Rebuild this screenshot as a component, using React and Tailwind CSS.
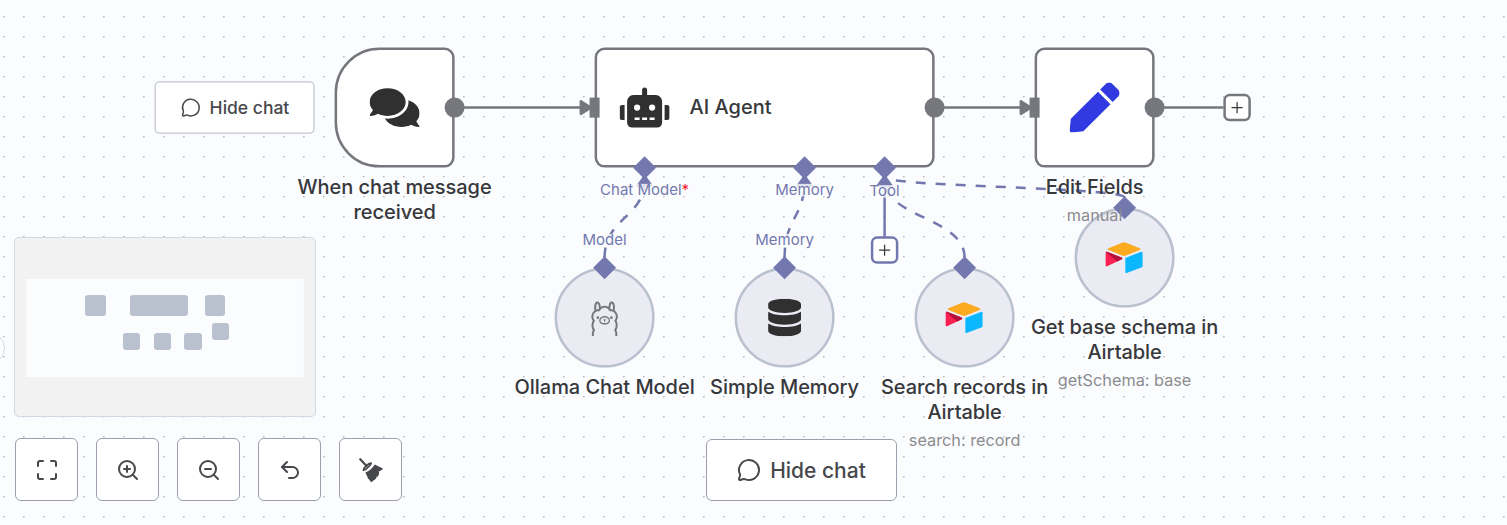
import React from "react";
import { MessageCircle, Maximize, ZoomIn, ZoomOut, Undo2, Plus } from "lucide-react";
import { FaComments, FaRobot, FaPen, FaDatabase } from "react-icons/fa";
import { SiOllama } from "react-icons/si";

const AirtableIcon = ({ className }) => (
  <svg viewBox="0 0 200 170" className={className}>
    <path fill="#fcab21" d="M90.04 12.37 24.08 39.66c-3.67 1.52-3.63 6.73.06 8.19l66.24 26.27a24.58 24.58 0 0 0 18.12 0l66.23-26.27c3.69-1.46 3.73-6.67.06-8.19l-65.96-27.29a24.58 24.58 0 0 0-18.79 0" />
    <path fill="#0bb8ff" d="M105.31 88.46v65.62c0 3.12 3.15 5.26 6.05 4.1l73.81-28.64a4.42 4.42 0 0 0 2.79-4.11V59.81c0-3.12-3.15-5.26-6.05-4.11l-73.81 28.65a4.42 4.42 0 0 0-2.79 4.11" />
    <path fill="#fb1f52" d="m88.08 91.85-21.9 10.57-2.23 1.08-46.24 22.15c-2.93 1.41-6.67-.72-6.67-3.98V60.09c0-1.18.6-2.2 1.41-2.96.34-.34.72-.62 1.12-.84 1.11-.66 2.69-.84 4.03-.31l70.11 27.78c3.57 1.41 3.85 6.41.37 8.09" />
    <path fill="#b3103c" d="m88.08 91.85-21.9 10.57-53.72-45.29c.34-.34.72-.62 1.12-.84 1.11-.66 2.69-.84 4.03-.31l70.11 27.78c3.56 1.41 3.84 6.41.36 8.09" />
  </svg>
);

const BroomIcon = () => (
  <svg viewBox="0 0 24 24" className="h-6 w-6 overflow-visible" fill="#47484b">
    <path d="M1.2 1.2 7.6 8" fill="none" stroke="#47484b" strokeWidth="2.2" strokeLinecap="round" />
    <path d="M4.6 12.2C5.2 9.2 8.2 6 12 5.2" fill="none" stroke="#47484b" strokeWidth="2" strokeLinecap="round" />
    <path d="M6.6 11.6 11.8 6.4" fill="none" stroke="#47484b" strokeWidth="1.6" strokeLinecap="round" />
    <path d="M6.4 14.6C10 13.2 13.6 10 15.8 6.4L24.2 10.8 20.8 13.2 19.6 13.2 20.2 15.2 18.9 18.8 17.6 18.4 17.2 20.4 12.2 24.2 9 20.2Z" />
  </svg>
);

const Dots = () => (
  <svg className="absolute inset-0 h-full w-full">
    <defs>
      <pattern id="dots" width="20" height="20" patternUnits="userSpaceOnUse">
        <circle cx="3.9" cy="16.7" r="0.75" fill="#989ba2" />
      </pattern>
    </defs>
    <rect width="100%" height="100%" fill="url(#dots)" />
  </svg>
);

const Diamond = ({ className }) => (
  <span className={`absolute h-[12.8px] w-[12.8px] -translate-x-1/2 -translate-y-1/2 rotate-45 bg-[#7278ae] ${className}`} />
);

const OutputDot = () => (
  <span className="absolute right-0 top-1/2 h-4 w-4 -translate-y-1/2 translate-x-1/2 rounded-full bg-[#76777d]" />
);

const InputBar = () => (
  <span className="absolute left-0 top-1/2 h-4 w-2 -translate-x-1/2 -translate-y-1/2 bg-[#76777d]" />
);

const Caption = ({ className, title, subtitle }) => (
  <div className={`absolute left-1/2 z-20 -translate-x-1/2 text-center ${className}`}>
    <div className="text-base font-[460] leading-5 tracking-[-0.04px] text-[#37383b]">{title}</div>
    {subtitle && <div className="pt-[5px] text-[13px] leading-4 text-[#8b8c8f]">{subtitle}</div>}
  </div>
);

const RoundNode = ({ className, children, title, subtitle, captionClass }) => (
  <div className={`absolute h-20 w-20 ${className}`}>
    <div className="flex h-full w-full items-center justify-center rounded-full border-2 border-[#b9c0ce] bg-[#ebebf4]">
      {children}
    </div>
    <Diamond className="left-1/2 top-0" />
    <Caption className={`top-[85.2px] ${captionClass}`} title={title} subtitle={subtitle} />
  </div>
);

const PortLabel = ({ className, children }) => (
  <div className={`absolute z-10 -translate-x-1/2 -translate-y-1/2 whitespace-nowrap bg-[#fbfcfe]/80 text-xs leading-[10px] text-[#7278ae] ${className}`}>
    {children}
  </div>
);

const PlusBox = ({ className }) => (
  <div className={`absolute flex h-[22px] w-[22px] -translate-x-1/2 -translate-y-1/2 items-center justify-center rounded-[5px] border-2 bg-white ${className}`}>
    <Plus size={14} strokeWidth={1.7} className="text-[#37383b]" />
  </div>
);

const Edges = () => (
  <svg className="absolute left-0 top-0 h-[400px] w-[1200px] overflow-visible" fill="none">
    <g stroke="#76777d" strokeWidth="2">
      <path d="M352 80H454M736 80H806M912 80H967" />
      <path d="M453 75 461 80 453 85ZM805 75 813 80 805 85Z" fill="#76777d" strokeLinejoin="round" />
    </g>
    <g stroke="#7278ae" strokeWidth="2">
      <g strokeDasharray="8 8">
        <path d="M472 200C472 168 504 168 504 138" />
        <path d="M616 200C616 168 632 168 632 138" />
        <path d="M760 200C760 168 696 168 696 138" />
        <path d="M888 152C888 143.5 696 143.5 696 135.5" />
      </g>
      <path d="M696 146V184" />
      <g fill="#7278ae" strokeLinejoin="round">
        <path d="M504 135 509.5 142.5H498.5ZM632 135 637.5 142.5H626.5ZM696 135 701.5 142.5H690.5Z" />
      </g>
    </g>
  </svg>
);

const miniNodes = [
  [70, 57, 21, 21], [115, 57, 58, 21], [190, 57, 20, 21], [108, 95, 17, 17],
  [139, 95, 17, 17], [169, 95, 18, 17], [197, 85, 17, 17],
];

const MiniMap = () => (
  <div className="h-[180px] w-[302px] overflow-hidden rounded-[5px] border border-[#d2d7e3] bg-[#f2f2f2]">
    <svg className="h-full w-full">
      <rect x="11.4" y="41" width="277.4" height="98" fill="#fbfcfe" />
      {miniNodes.map(([x, y, w, h]) => (
        <rect key={`${x}-${y}`} x={x} y={y} width={w} height={h} rx="3" fill="#b9c0ce" />
      ))}
    </svg>
  </div>
);

const ControlButton = ({ children }) => (
  <button className="flex h-[63px] w-[63px] items-center justify-center rounded-md border border-[#9c9fae] bg-white text-[#47484b]">
    {children}
  </button>
);

const Canvas = () => (
  <div className="absolute left-0 top-0 h-0 w-0 origin-top-left translate-x-[14.6px] translate-y-[7.6px] scale-125">
    <button className="absolute left-[112.4px] top-[59.2px] flex h-[42px] w-32 items-center justify-center gap-[7px] whitespace-nowrap rounded border border-[#c2c6d2] bg-white text-sm font-[460] text-[#47484b]">
      <MessageCircle size={16} strokeWidth={1.8} />
      Hide chat
    </button>

    <div className="absolute left-[256px] top-8 h-24 w-24">
      <div className="flex h-full w-full items-center justify-center rounded-l-[36px] rounded-r-lg border-2 border-[#76777d] bg-white">
        <FaComments className="h-10 w-10 text-[#303030]" />
      </div>
      <Caption className="top-[101.2px] w-44" title="When chat message received" />
    </div>

    <div className="absolute left-[464px] top-8 h-24 w-[272px]">
      <div className="flex h-full w-full items-center gap-4 rounded-lg border-2 border-[#76777d] bg-white pl-[18px]">
        <FaRobot className="h-10 w-10 text-[#303030]" />
        <span className="pb-[1.6px] text-base font-[460] text-[#37383b]">AI Agent</span>
      </div>
    </div>

    <div className="absolute left-[816px] top-8 h-24 w-24">
      <div className="flex h-full w-full items-center justify-center rounded-lg border-2 border-[#76777d] bg-white">
        <FaPen className="h-10 w-10 text-[#3139e0]" />
      </div>
    </div>

    <Edges />

    <div className="absolute left-[256px] top-8 h-24 w-24"><OutputDot /></div>
    <div className="absolute left-[464px] top-8 h-24 w-[272px]">
      <InputBar />
      <OutputDot />
      <Diamond className="left-10 top-full" />
      <Diamond className="left-[168px] top-full" />
      <Diamond className="left-[232px] top-full" />
    </div>
    <PortLabel className="left-[504px] top-[146px]">Chat Model<span className="text-[#f01830]">*</span></PortLabel>
    <PortLabel className="left-[632px] top-[146px]">Memory</PortLabel>
    <PortLabel className="left-[696px] top-[147px]">Tool</PortLabel>
    <PortLabel className="left-[472px] top-[186px]">Model</PortLabel>
    <PortLabel className="left-[616px] top-[186px]">Memory</PortLabel>

    <RoundNode className="left-[432px] top-[208px]" title="Ollama Chat Model" captionClass="whitespace-nowrap">
      <SiOllama className="relative top-[0.8px] h-7 w-7 text-[#76777d]" />
    </RoundNode>
    <RoundNode className="left-[576px] top-[208px]" title="Simple Memory" captionClass="whitespace-nowrap">
      <FaDatabase className="h-[30px] w-[30px] text-[#303030]" />
    </RoundNode>
    <RoundNode className="left-[720px] top-[208px]" title="Search records in Airtable" subtitle="search: record" captionClass="w-40">
      <AirtableIcon className="w-[33.4px]" />
    </RoundNode>
    <RoundNode className="left-[848px] top-[160px]" title="Get base schema in Airtable" subtitle="getSchema: base" captionClass="w-40">
      <AirtableIcon className="w-[33.4px]" />
    </RoundNode>

    <div className="absolute left-[816px] top-8 h-24 w-24">
      <InputBar />
      <OutputDot />
      <Caption className="top-[101.2px] whitespace-nowrap" title="Edit Fields" subtitle="manual" />
    </div>
    <PlusBox className="left-[978.4px] top-20 border-[#76777d]" />
    <PlusBox className="left-[696px] top-[194.4px] border-[#7278ae]" />
  </div>
);

export default function App() {
  return (
    <div className="relative h-[525px] w-full overflow-hidden bg-[#fbfcfe] font-['Inter',sans-serif]">
      <Dots />
      <Canvas />
      <div className="absolute -left-[27px] top-[332px] h-8 w-8 rounded-full border border-[#d2d7e3] bg-white" />
      <div className="absolute inset-x-0 bottom-6 z-30 flex items-end pl-[14px]">
        <div className="flex flex-col gap-[21px]">
          <MiniMap />
          <div className="flex gap-[18px] pl-px">
            <ControlButton><Maximize size={24} /></ControlButton>
            <ControlButton><ZoomIn size={24} /></ControlButton>
            <ControlButton><ZoomOut size={24} /></ControlButton>
            <ControlButton><Undo2 size={24} /></ControlButton>
            <ControlButton><BroomIcon /></ControlButton>
          </div>
        </div>
        <button className="ml-[304px] flex h-[62px] w-[191px] items-center justify-center gap-[9px] rounded-md border border-[#9c9fae] bg-white text-[21px] font-[460] text-[#47484b]">
          <MessageCircle size={24} strokeWidth={2} />
          <span className="pt-0.5">Hide chat</span>
        </button>
      </div>
    </div>
  );
}
